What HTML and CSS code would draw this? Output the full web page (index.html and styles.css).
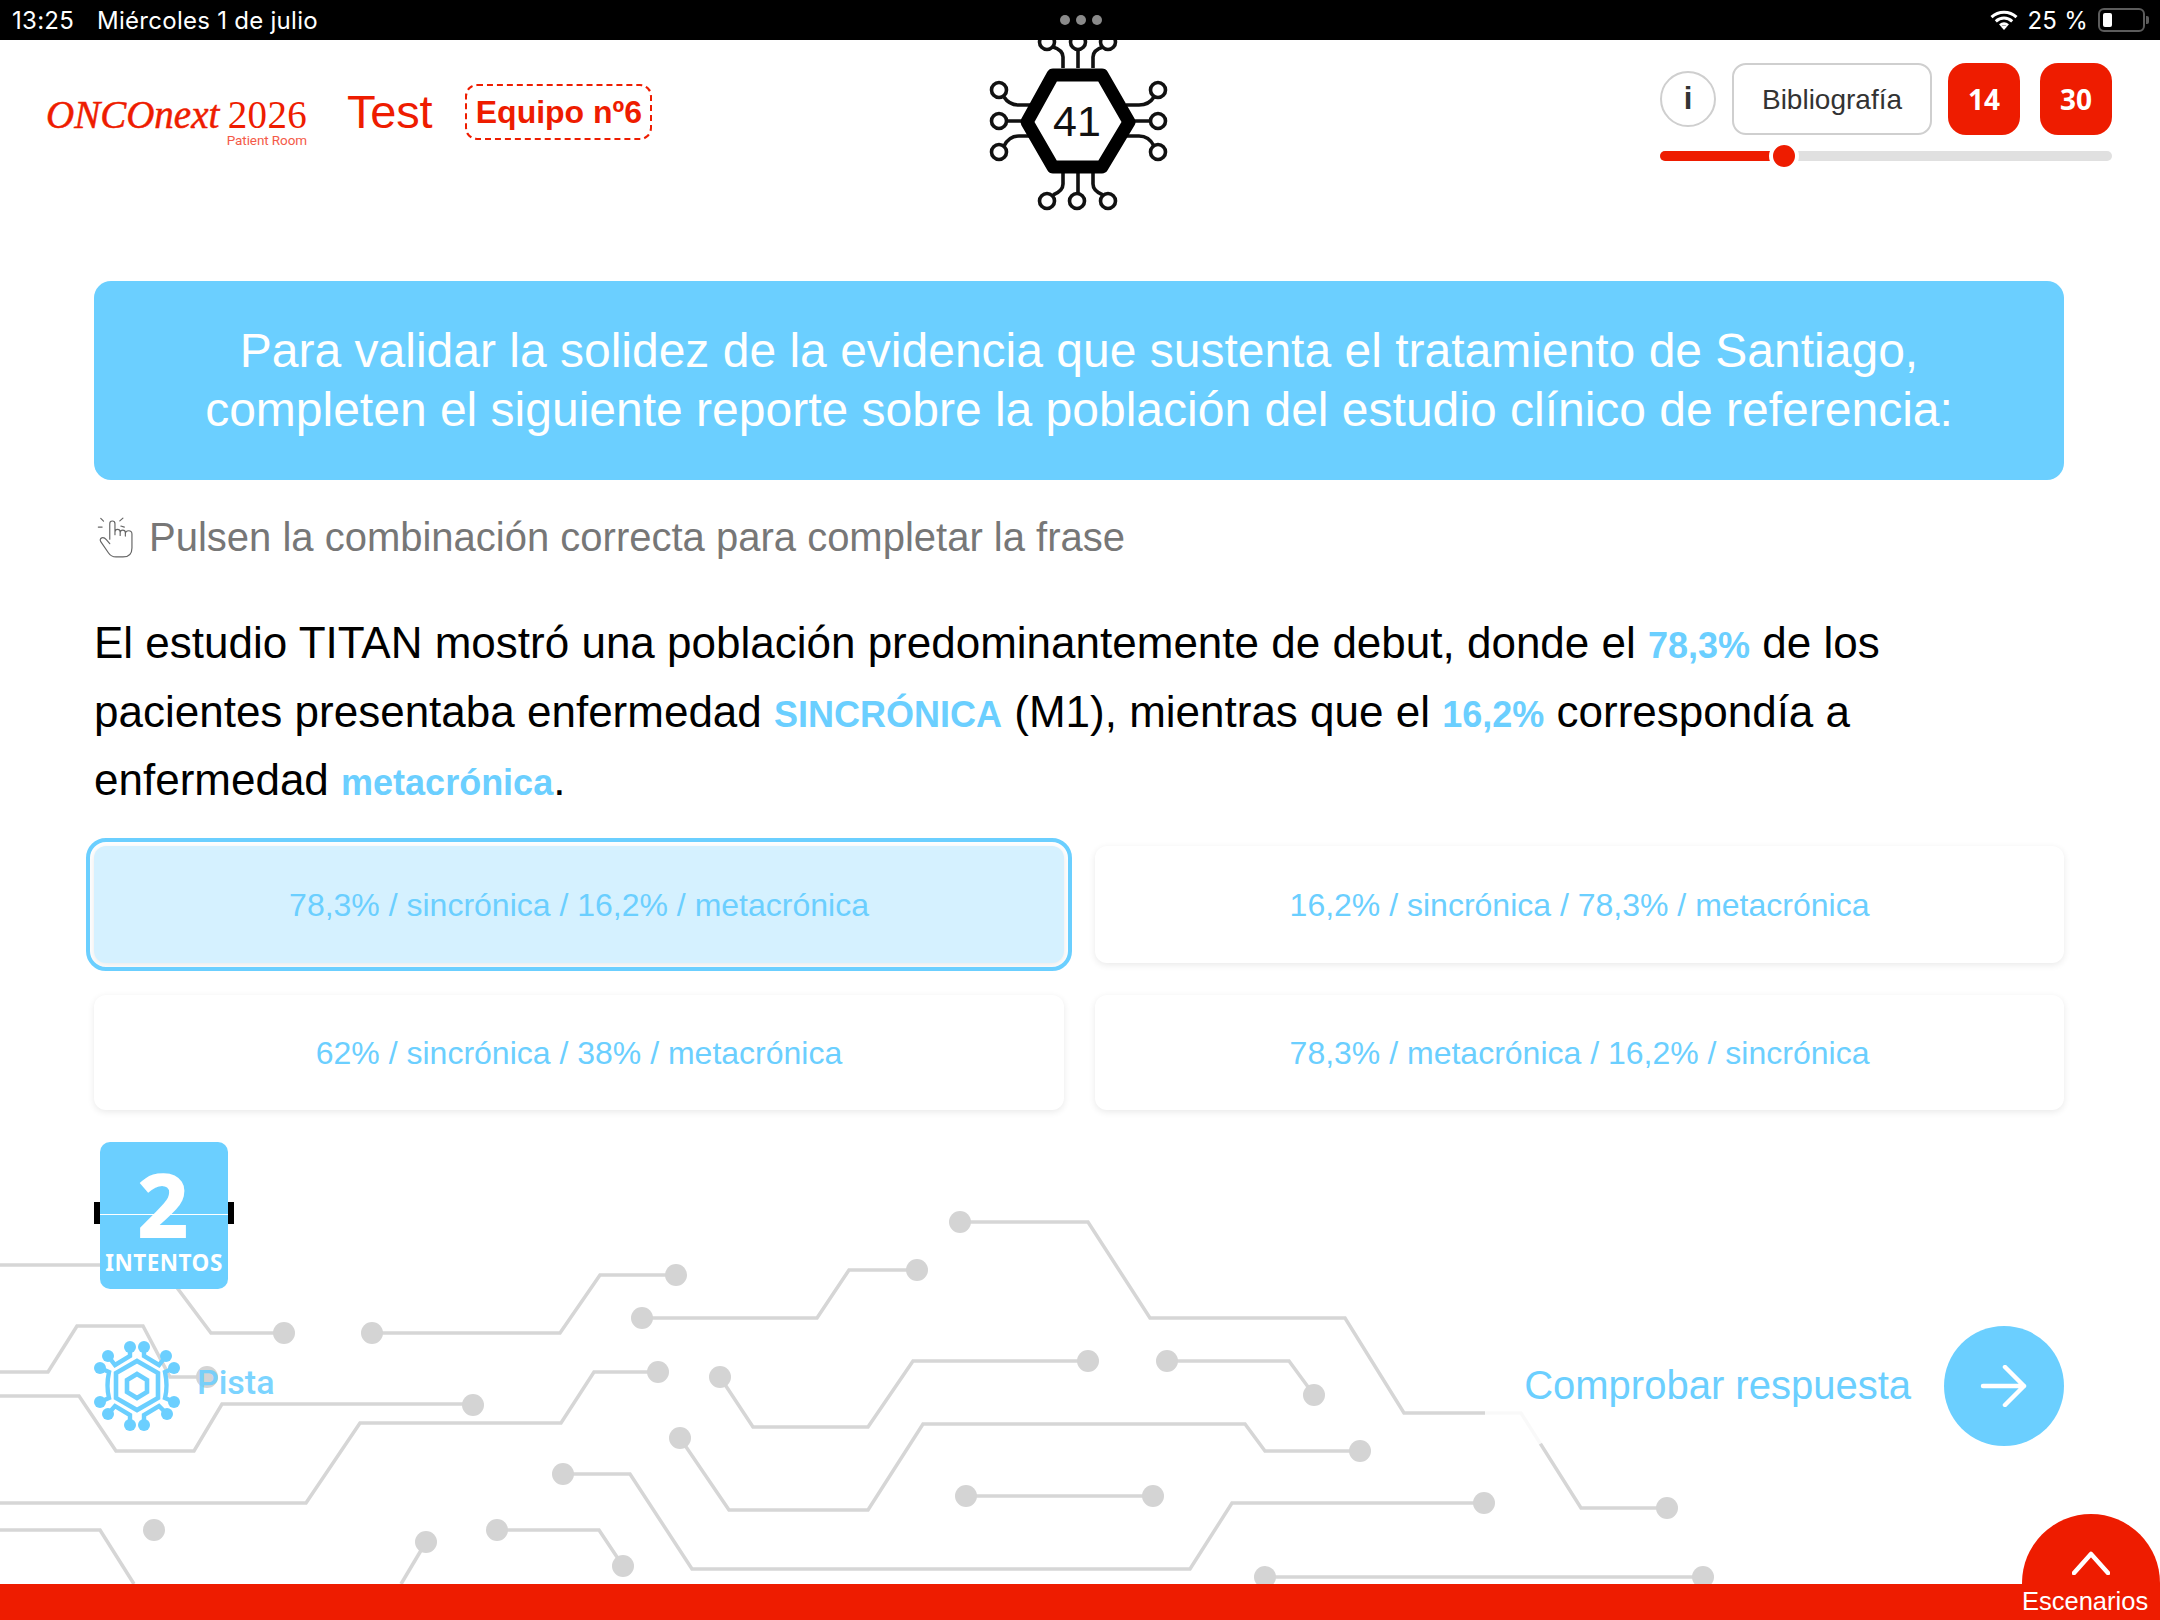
FILE: index.html
```html
<!DOCTYPE html>
<html lang="es">
<head>
<meta charset="utf-8">
<title>ONCOnext 2026</title>
<link rel="stylesheet" href="styles.css">
</head>
<body>
<div class="page">
  <svg class="circuit" viewBox="0 0 2160 1620" width="2160" height="1620" aria-hidden="true">
    <g class="traces">
      <path d="M0 1265H160L211 1333H284"/>
      <path d="M372 1333H560L600 1275H676"/>
      <path d="M642 1318H817L849 1270H917"/>
      <path d="M960 1222H1088L1150 1318H1345L1404 1413H1521L1581 1508H1667"/>
      <path d="M0 1372H48L77 1326H143L170 1377H207"/>
      <path d="M0 1396H79L116 1451H194L222 1404H473"/>
      <path d="M0 1503H306L360 1423H561L594 1372H658"/>
      <path d="M720 1377L753 1427H868L913 1361H1088"/>
      <path d="M1167 1361H1289L1314 1395"/>
      <path d="M680 1438L729 1510H868L923 1424H1245L1265 1451H1360"/>
      <path d="M966 1496H1153"/>
      <path d="M563 1474H630L692 1569H1190L1232 1503H1484"/>
      <path d="M0 1530H100L134 1584"/>
      <path d="M426 1542L401 1584"/>
      <path d="M497 1530H599L623 1566"/>
      <path d="M1265 1577H1703"/>
    </g>
    <path class="fade" d="M1485 1413H1521L1540 1444"/>
    <g class="pads">
      <circle cx="284" cy="1333" r="11"/><circle cx="372" cy="1333" r="11"/><circle cx="676" cy="1275" r="11"/>
      <circle cx="642" cy="1318" r="11"/><circle cx="917" cy="1270" r="11"/><circle cx="960" cy="1222" r="11"/>
      <circle cx="1667" cy="1508" r="11"/><circle cx="207" cy="1377" r="11"/><circle cx="473" cy="1405" r="11"/>
      <circle cx="658" cy="1372" r="11"/><circle cx="720" cy="1377" r="11"/><circle cx="1088" cy="1361" r="11"/>
      <circle cx="1167" cy="1361" r="11"/><circle cx="1314" cy="1395" r="11"/><circle cx="680" cy="1438" r="11"/>
      <circle cx="1360" cy="1451" r="11"/><circle cx="966" cy="1496" r="11"/><circle cx="1153" cy="1496" r="11"/>
      <circle cx="563" cy="1474" r="11"/><circle cx="1484" cy="1503" r="11"/><circle cx="154" cy="1530" r="11"/>
      <circle cx="426" cy="1542" r="11"/><circle cx="497" cy="1530" r="11"/><circle cx="623" cy="1566" r="11"/>
      <circle cx="1265" cy="1577" r="11"/><circle cx="1703" cy="1577" r="11"/>
    </g>
  </svg>

  <div class="status">
    <div class="status-left"><span>13:25</span><span>Miércoles 1 de julio</span></div>
    <div class="status-dots"><i></i><i></i><i></i></div>
    <div class="status-right">
      <svg class="wifi" viewBox="0 0 28 20" width="28" height="20" aria-hidden="true">
        <path d="M1.5 7.2C8.6 .6 19.4 .6 26.5 7.2M5.8 11.4C10.6 7 17.4 7 22.2 11.4M10 15.4C12.4 13.4 15.6 13.4 18 15.4" />
        <path class="wifi-dot" d="M14 20L10.8 16.6C12.6 15 15.4 15 17.2 16.6Z"/>
      </svg>
      <span>25 %</span>
      <div class="battery"><div class="battery-level"></div></div>
      <div class="battery-nub"></div>
    </div>
  </div>

  <header class="header">
    <div class="brand">
      <div class="logo">
        <div class="logo-main"><em>ONCOnext</em><span>2026</span></div>
        <div class="logo-sub">Patient Room</div>
      </div>
      <div class="test">Test</div>
      <div class="team">Equipo nº6</div>
    </div>
    <div class="chip">
      <svg viewBox="990 30 180 130" width="180" height="130" aria-hidden="true">
        <g class="chip-lines">
          <path d="M1005 97Q1010 105 1020 105H1031M1008 121H1024M1005 146Q1010 136 1020 136H1031"/>
          <path d="M1155 97Q1150 105 1140 105H1127M1152 121H1134M1155 146Q1150 136 1140 136H1127"/>
          <path d="M1064 68V57Q1064 50 1054 47M1079 68V49M1094 68V57Q1094 50 1104 47"/>
          <path d="M1064 172V184Q1064 191 1054 195M1079 172V193M1094 172V184Q1094 191 1104 195"/>
          <circle cx="1000" cy="90" r="7.5"/><circle cx="1000" cy="121" r="7.5"/><circle cx="1000" cy="152" r="7.5"/>
          <circle cx="1159" cy="90" r="7.5"/><circle cx="1159" cy="121" r="7.5"/><circle cx="1159" cy="152" r="7.5"/>
          <circle cx="1048" cy="42" r="7.5"/><circle cx="1079" cy="42" r="7.5"/><circle cx="1109" cy="42" r="7.5"/>
          <circle cx="1048" cy="201" r="7.5"/><circle cx="1078" cy="201" r="7.5"/><circle cx="1109" cy="201" r="7.5"/>
        </g>
        <path class="chip-hex" d="M1028 122L1054 75H1103L1130 122L1103 167H1054Z"/>
      </svg>
      <div class="chip-num">41</div>
    </div>
    <div class="tools">
      <div class="tools-row">
        <div class="info">i</div>
        <div class="biblio">Bibliografía</div>
        <div class="counter">14</div>
        <div class="counter">30</div>
      </div>
      <div class="slider"><div class="slider-fill"></div><div class="slider-thumb"></div></div>
    </div>
  </header>

  <main class="main">
    <div class="banner">Para validar la solidez de la evidencia que sustenta el tratamiento de Santiago,<br>completen el siguiente reporte sobre la población del estudio clínico de referencia:</div>

    <div class="hint">
      <svg viewBox="52 58 108 124" width="38" height="43" aria-hidden="true">
        <path d="M88 125V80a7.5 7.5 0 0 1 15 0V112M103 104a7.5 7.5 0 0 1 15 0V114M118 106a7.5 7.5 0 0 1 15 0V116M133 110a8 8 0 0 1 19 0V150Q152 176 126 176H106Q92 176 84 164L62 132Q58 124 65 121Q72 119 78 126L88 138"/>
        <path d="M62 65L70 73M126 64L117 72M55 90H66M120 87L130 90"/>
      </svg>
      <span>Pulsen la combinación correcta para completar la frase</span>
    </div>

    <p class="statement">El estudio TITAN mostró una población predominantemente de debut, donde el <b>78,3%</b> de los pacientes presentaba enfermedad <b>SINCRÓNICA</b> (M1), mientras que el <b>16,2%</b> correspondía a enfermedad <b>metacrónica</b>.</p>

    <div class="options">
      <div class="option selected">78,3% / sincrónica / 16,2% / metacrónica</div>
      <div class="option">16,2% / sincrónica / 78,3% / metacrónica</div>
      <div class="option">62% / sincrónica / 38% / metacrónica</div>
      <div class="option">78,3% / metacrónica / 16,2% / sincrónica</div>
    </div>

    <div class="tries">
      <div class="tries-num">2</div>
      <div class="tries-line"></div>
      <div class="tries-label">INTENTOS</div>
    </div>

    <div class="actions">
      <div class="clue">
        <svg viewBox="94 1342 86 90" width="86" height="90" aria-hidden="true">
          <g class="clue-lines">
            <path class="thick" d="M137 1362L158 1374V1399L137 1411L116 1399V1374Z"/>
            <path class="thick" d="M137 1375L147 1381V1393L137 1399L127 1393V1381Z"/>
            <path d="M130 1347V1357L115 1366L108 1357M144 1347V1357L159 1366L166 1357"/>
            <path d="M100 1369L109 1373Q106 1387 109 1399L100 1403M174 1369L165 1373Q168 1387 165 1399L174 1403"/>
            <path d="M130 1426V1416L115 1407L108 1415M144 1426V1416L159 1407L167 1415"/>
          </g>
          <g class="clue-dots">
            <circle cx="130" cy="1348" r="6"/><circle cx="144" cy="1348" r="6"/><circle cx="108" cy="1357" r="6"/><circle cx="166" cy="1357" r="6"/>
            <circle cx="100" cy="1369" r="6"/><circle cx="174" cy="1369" r="6"/><circle cx="100" cy="1403" r="6"/><circle cx="174" cy="1403" r="6"/>
            <circle cx="108" cy="1415" r="6"/><circle cx="167" cy="1415" r="6"/><circle cx="130" cy="1426" r="6"/><circle cx="144" cy="1426" r="6"/>
          </g>
        </svg>
        <span>Pista</span>
      </div>
      <div class="check">
        <span>Comprobar respuesta</span>
        <div class="check-btn">
          <svg viewBox="0 0 48 42" width="48" height="42" aria-hidden="true"><path d="M3 21H44M25 2L44 21L25 40"/></svg>
        </div>
      </div>
    </div>
  </main>

  <footer class="footer"></footer>
  <div class="scenes">
    <svg viewBox="0 0 38 24" width="38" height="24" aria-hidden="true"><path d="M2 22L19 3L36 22"/></svg>
    <span>Escenarios</span>
  </div>
</div>
</body>
</html>
```
FILE: styles.css
```css
* { box-sizing: border-box; }
html, body { margin: 0; padding: 0; background: #fff; }
body { font-family: "Liberation Sans", Arial, sans-serif; color: #000; }

.page {
  position: relative;
  width: 2160px;
  height: 1620px;
  display: flex;
  flex-direction: column;
  overflow: hidden;
  background: #fff;
}

/* background circuit */
.circuit { position: absolute; left: 0; top: 0; }
.traces path { fill: none; stroke: #d6d6d6; stroke-width: 3.5; }
.fade { fill: none; stroke: #fff; stroke-opacity: .85; stroke-width: 6; }
.pads circle { fill: #d4d4d4; }

/* status bar */
.status {
  position: relative;
  z-index: 3;
  flex: none;
  height: 40px;
  display: grid;
  grid-template-columns: 1fr auto 1fr;
  align-items: center;
  padding: 0 11px 0 12px;
  background: #000;
  color: #fff;
  font-family: Inter, "Liberation Sans", sans-serif;
  font-size: 24px;
  letter-spacing: .27px;
}
.status-left { display: flex; gap: 23px; }
.status-dots { display: flex; gap: 6px; }
.status-dots i { width: 10px; height: 10px; border-radius: 50%; background: #8a8a8a; }
.status-right { display: flex; align-items: center; justify-content: flex-end; }
.wifi { margin-right: 9px; }
.wifi path { fill: none; stroke: #fff; stroke-width: 3; }
.wifi .wifi-dot { fill: #fff; stroke: none; }
.battery {
  width: 47px;
  height: 24px;
  margin-left: 10px;
  padding: 3px;
  border: 2px solid #5c5c5c;
  border-radius: 6px;
}
.battery-level { width: 9px; height: 14px; border-radius: 2px; background: #fff; }
.battery-nub { width: 3px; height: 8px; margin-left: 1px; border-radius: 0 2px 2px 0; background: #5c5c5c; }

/* header */
.header {
  position: relative;
  flex: none;
  height: 241px;
  display: grid;
  grid-template-columns: 1fr auto 1fr;
  align-items: start;
  padding: 0 48px 0 46px;
}
.brand { display: flex; align-items: flex-start; margin-top: 44px; color: #ee1c00; }
.logo { width: 261px; margin-top: 14px; line-height: 1; font-family: "Liberation Serif", serif; }
.logo-main { display: flex; justify-content: space-between; font-size: 39px; line-height: 34px; }
.logo-main em { -webkit-text-stroke: .5px #ee1c00; }
.logo-main span { letter-spacing: .3px; }
.logo-sub {
  margin-top: 1px;
  text-align: right;
  font-family: Roboto, sans-serif;
  font-size: 13.5px;
  line-height: 14px;
  letter-spacing: -.1px;
  color: #f45a48;
}
.test { margin-left: 40px; font-size: 47px; line-height: 55px; letter-spacing: -.2px; }
.team {
  width: 187px;
  height: 56px;
  margin-left: 33px;
  display: flex;
  align-items: center;
  justify-content: center;
  border: 2px dashed #ee1c00;
  border-radius: 12px;
  font-size: 32px;
  font-weight: 700;
}

.chip { position: relative; z-index: 1; margin-top: -10px; }
.chip svg { display: block; overflow: visible; }
.chip-lines path, .chip-lines circle { fill: none; stroke: #111; stroke-width: 3.6; }
.chip-hex { fill: #fff; stroke: #000; stroke-width: 13; stroke-linejoin: round; }
.chip-num {
  position: absolute;
  left: 0;
  right: 4px;
  top: 67px;
  text-align: center;
  font-size: 43px;
  line-height: 48px;
  color: #111;
}

.tools { justify-self: end; width: 452px; margin-top: 23px; }
.tools-row { display: flex; align-items: center; }
.info {
  width: 56px;
  height: 56px;
  display: flex;
  align-items: center;
  justify-content: center;
  border: 2px solid #cfcfcf;
  border-radius: 50%;
  background: #fff;
  font-size: 31px;
  font-weight: 700;
  color: #333;
}
.biblio {
  width: 200px;
  height: 72px;
  margin-left: 16px;
  padding-top: 1px;
  display: flex;
  align-items: center;
  justify-content: center;
  border: 2px solid #cfcfcf;
  border-radius: 14px;
  background: #fff;
  font-size: 28px;
  color: #333;
}
.counter {
  width: 72px;
  height: 72px;
  margin-left: 16px;
  display: flex;
  align-items: center;
  justify-content: center;
  border-radius: 18px;
  background: #ee1c00;
  color: #fff;
  font-family: "Noto Sans", sans-serif;
  font-size: 28px;
  font-weight: 700;
}
.counter + .counter { margin-left: 20px; }
.slider {
  position: relative;
  height: 10px;
  margin-top: 16px;
  border-radius: 5px;
  background: #e0e0e0;
}
.slider-fill { width: 110px; height: 10px; border-radius: 5px 0 0 5px; background: #ee1c00; }
.slider-thumb {
  position: absolute;
  left: 109px;
  top: -10px;
  width: 30px;
  height: 30px;
  border: 4px solid #fff;
  border-radius: 50%;
  background: #ee1c00;
}

/* main */
.main { position: relative; flex: none; padding: 0 96px 0 94px; }
.banner {
  height: 199px;
  padding-top: 40px;
  text-align: center;
  border-radius: 17px;
  background: #6bcfff;
  color: #fff;
  font-size: 48px;
  line-height: 59px;
}
.hint {
  height: 46px;
  margin-top: 34px;
  display: flex;
  align-items: center;
  gap: 14px;
  padding-left: 3px;
  color: #777;
  font-size: 40px;
}
.hint svg { flex: none; }
.hint path { fill: none; stroke: #666; stroke-width: 3.4; stroke-linecap: round; stroke-linejoin: round; }
.statement {
  margin: 49px 0 0;
  font-size: 44px;
  line-height: 68.5px;
  color: #000;
}
.statement b { font-size: 36px; line-height: 1; color: #6bcfff; }

.options {
  margin-top: 31px;
  display: grid;
  grid-template-columns: 970px 969px;
  grid-template-rows: 117px 115px;
  column-gap: 31px;
  row-gap: 32px;
}
.option {
  display: flex;
  align-items: center;
  justify-content: center;
  padding-top: 2px;
  border-radius: 12px;
  background: #fff;
  box-shadow: 0 2px 7px rgba(0, 0, 0, .09);
  color: #6bcfff;
  font-size: 32px;
}
.option.selected {
  background: #d5f1ff;
  outline: 4px solid #6bcfff;
  outline-offset: 4px;
}

.tries {
  position: relative;
  width: 128px;
  height: 147px;
  margin: 32px 0 0 6px;
  border-radius: 10px;
  background: #6bcfff;
  color: #fff;
  font-family: "Noto Sans", sans-serif;
  font-weight: 700;
  text-align: center;
}
.tries::before, .tries::after {
  content: "";
  position: absolute;
  top: 60px;
  width: 6px;
  height: 22px;
  background: #000;
}
.tries::before { left: -6px; }
.tries::after { right: -6px; }
.tries-num { font-size: 90px; font-weight: 800; line-height: 90px; padding: 16px 2px 0 0; height: 106px; }
.tries-line { position: absolute; left: 0; right: 0; top: 72px; height: 1px; background: #fff; }
.tries-label { font-size: 22.5px; line-height: 30px; letter-spacing: .5px; }

.actions {
  height: 120px;
  margin-top: 37px;
  display: flex;
  align-items: center;
  justify-content: space-between;
}
.clue { display: flex; align-items: center; gap: 17px; }
.clue svg { display: block; }
.clue-lines path { fill: none; stroke: #6bcfff; stroke-width: 4.4; }
.clue-lines .thick { stroke-width: 4.6; }
.clue-dots circle { fill: #6bcfff; }
.clue span {
  font-family: Roboto, sans-serif;
  font-weight: 500;
  font-size: 34px;
  color: #6bcfff;
  opacity: .88;
  margin-top: -8px;
}
.check { display: flex; align-items: center; gap: 33px; color: #6bcfff; font-size: 40px; }
.check-btn {
  width: 120px;
  height: 120px;
  display: flex;
  align-items: center;
  justify-content: center;
  border-radius: 50%;
  background: #6bcfff;
}
.check-btn path { fill: none; stroke: #fff; stroke-width: 4.5; stroke-linecap: round; stroke-linejoin: round; }

/* footer */
.footer { position: relative; flex: none; height: 36px; margin-top: auto; background: #ee1c00; }
.scenes {
  position: absolute;
  left: 2022px;
  top: 1514px;
  width: 138px;
  height: 106px;
  display: flex;
  flex-direction: column;
  align-items: flex-start;
  border-radius: 69px 69px 0 0;
  background: #ee1c00;
  color: #fff;
  font-size: 25.5px;
}
.scenes svg { margin: 37px 0 0 50px; display: block; }
.scenes path { fill: none; stroke: #fff; stroke-width: 4.5; stroke-linecap: round; stroke-linejoin: round; }
.scenes span { margin-top: 12px; line-height: 28px; }
```
